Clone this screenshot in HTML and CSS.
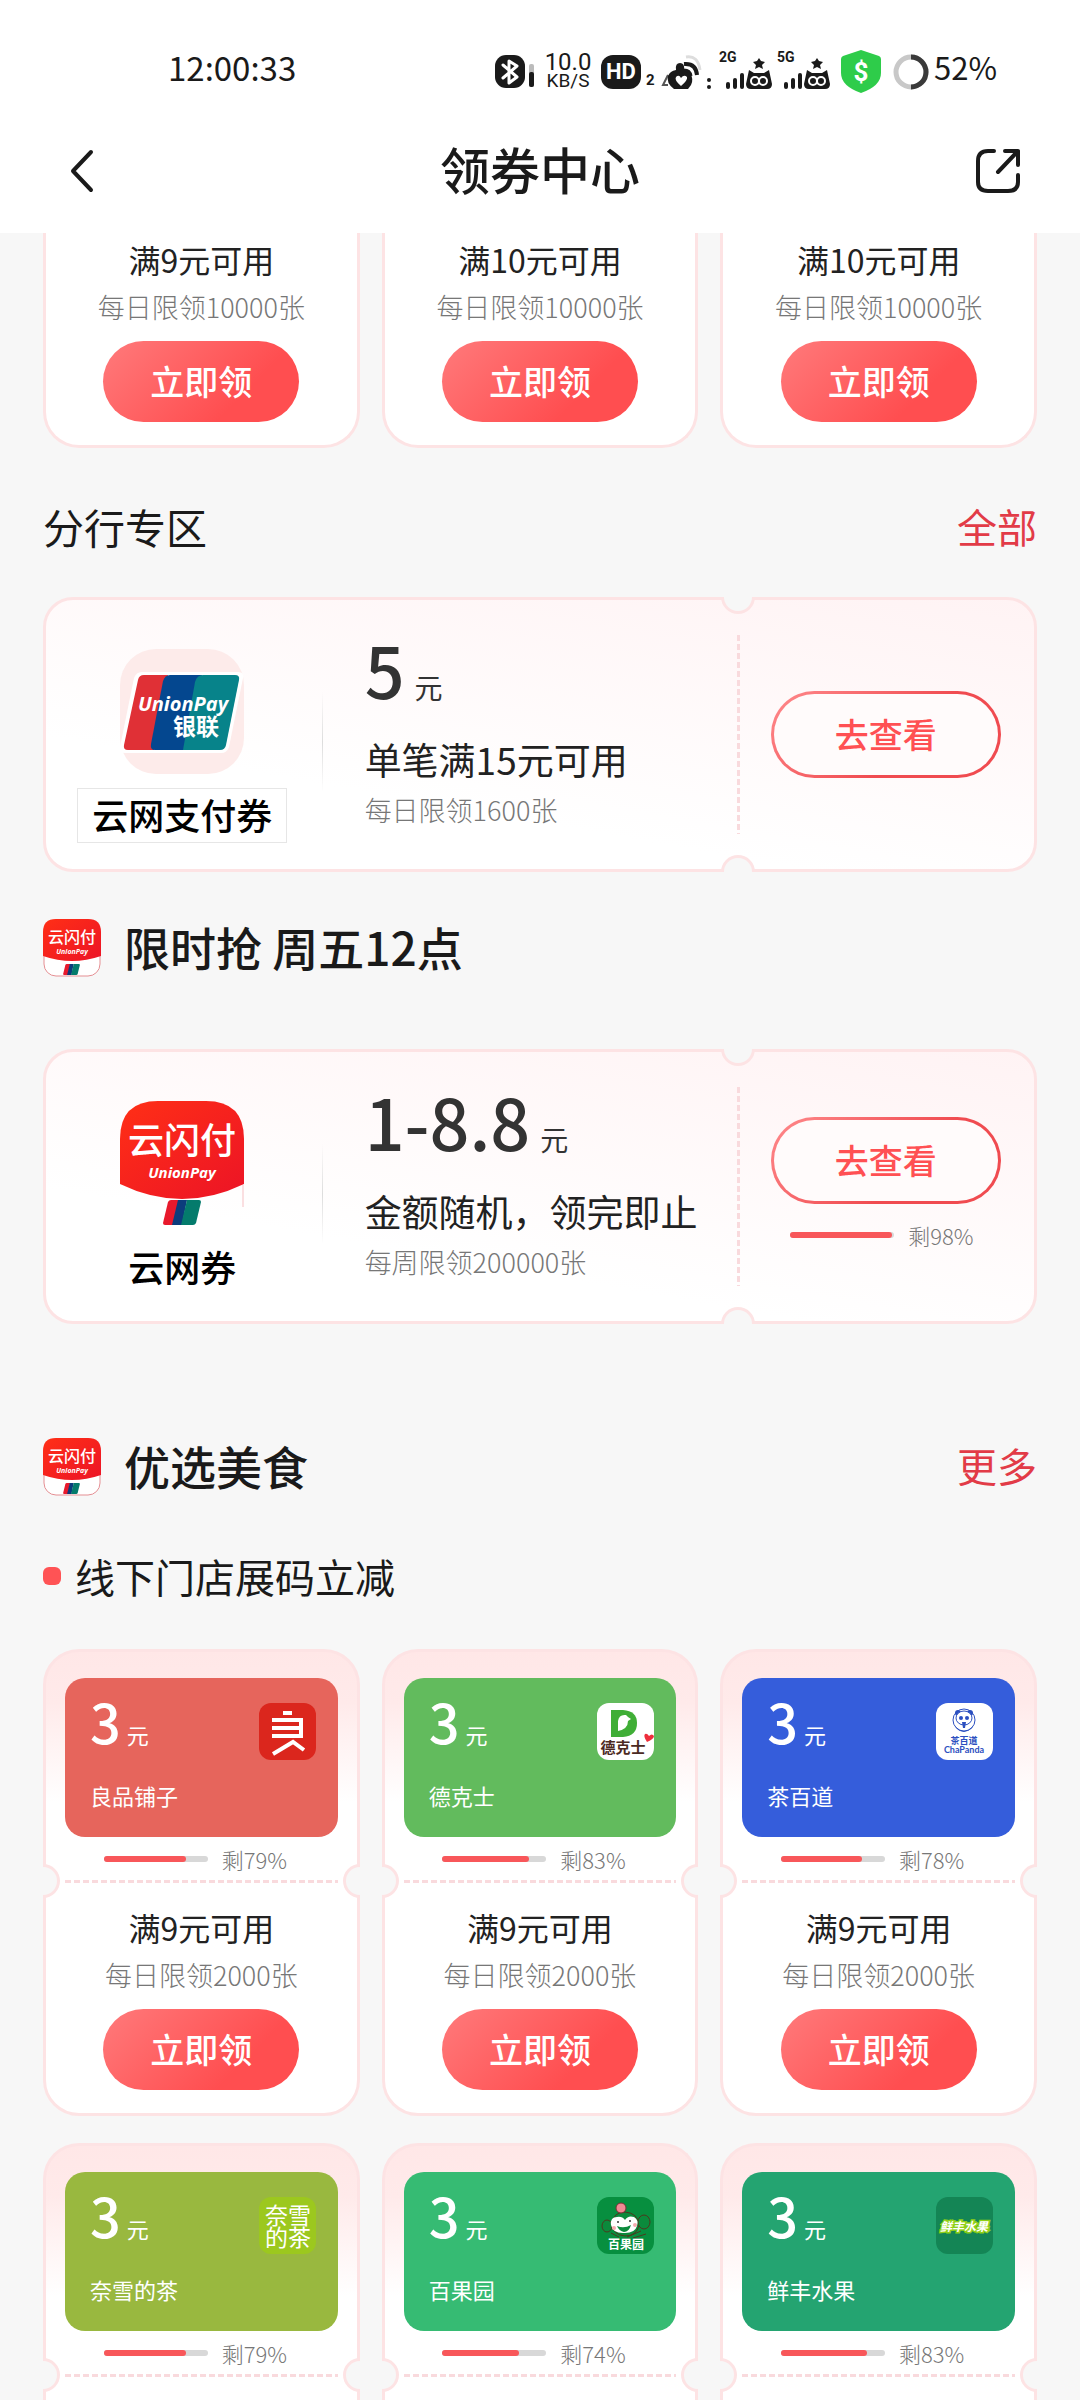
FILE: index.html
```html
<!DOCTYPE html>
<html lang="zh-CN">
<head>
    <meta charset="UTF-8">
    <meta name="viewport" content="width=device-width, initial-scale=1.0">
    <title>领券中心</title>
    <link rel="stylesheet" href="styles.css">
</head>
<body>
    <svg class="defs" width="0" height="0" aria-hidden="true">
        <defs>
            <linearGradient id="redFill" x1="0" y1="0" x2="1" y2="1">
                <stop offset="0" stop-color="#ff2f16"/>
                <stop offset="1" stop-color="#ec1426"/>
            </linearGradient>
        </defs>
        <symbol id="flag" viewBox="0 0 38 25">
            <path d="M8 0H16L11 25H2Q0 25 0 23L5 2Q6 0 8 0Z" fill="#e8192c"/>
            <path d="M15 0H24L19 25H9Z" fill="#0c3c7c"/>
            <path d="M24 0H36Q38 0 38 2L33 23Q32 25 30 25H18Z" fill="#047b6c"/>
        </symbol>
        <symbol id="quickpass" viewBox="0 0 58 58">
            <rect x="1" y="1" width="56" height="56" rx="12" fill="#fff" stroke="#e58f93"/>
            <path d="M0 37V13Q0 0 13 0H45Q58 0 58 13V37Q29 47 0 37Z" fill="url(#redFill)"/>
            <use href="#flag" x="20" y="45" width="17" height="11"/>
        </symbol>
        <symbol id="signal" viewBox="0 0 53 44">
            <g fill="#1a1a1a">
                <rect x="7" y="33" width="4" height="7" rx="2"/>
                <rect x="14" y="29" width="4" height="11" rx="2"/>
                <rect x="21" y="24" width="4" height="16" rx="2"/>
                <path d="M40 9l2 3 4 1-3 3 1 4-4-2-4 2 1-4-3-3 4-1z"/>
                <path d="M30 21l5 3h10l5-3 3 14q0 5-5 5H32q-5 0-5-5z"/>
            </g>
            <circle cx="36" cy="32" r="4" fill="none" stroke="#fff" stroke-width="2"/>
            <circle cx="44" cy="32" r="4" fill="none" stroke="#fff" stroke-width="2"/>
        </symbol>
    </svg>

    <div class="page">
        <header class="header">
            <div class="status">
                <span class="time">12:00:33</span>
                <div class="status-icons">
                    <svg width="40" height="44" viewBox="0 0 40 44">
                        <rect x="0" y="6" width="30" height="33" rx="11" fill="#1a1a1a"/>
                        <path d="M8 16L22 28L14 34V12L22 17L8 29" fill="none" stroke="#fff" stroke-width="3" stroke-linecap="round" stroke-linejoin="round"/>
                        <rect x="34" y="15" width="5" height="23" rx="2" fill="#bbb"/>
                        <rect x="34" y="23" width="5" height="15" rx="2" fill="#1a1a1a"/>
                    </svg>
                    <div class="speed"><span>10.0</span><small>KB/S</small></div>
                    <svg width="40" height="44" viewBox="0 0 40 44">
                        <rect x="0" y="6" width="40" height="34" rx="12" fill="#1a1a1a"/>
                        <text x="20" y="30" text-anchor="middle" class="ico-text" font-size="22" fill="#fff">HD</text>
                    </svg>
                    <svg width="68" height="44" viewBox="0 0 68 44">
                        <text x="0" y="36" class="ico-text" font-size="15" fill="#1a1a1a">2</text>
                        <path d="M22 26L17 36H22" fill="none" stroke="#555" stroke-width="2"/>
                        <path d="M40 8Q52 6 54 21" fill="none" stroke="#ddd" stroke-width="3"/>
                        <path d="M28 40Q20 34 22 27Q24 22 30 21Q29 14 34 14Q39 14 38 21Q42 20 44 24Q48 30 45 36L42 40Z" fill="#1a1a1a"/>
                        <path d="M38 15Q50 14 51 26" fill="none" stroke="#1a1a1a" stroke-width="4"/>
                        <path d="M38 21Q44 21 45 27" fill="none" stroke="#1a1a1a" stroke-width="3"/>
                        <path d="M35 37Q28 31 30 28Q33 25 35 29Q38 25 41 28Q42 31 35 37Z" fill="#fff"/>
                        <circle cx="63" cy="31" r="2" fill="#1a1a1a"/>
                        <circle cx="63" cy="38" r="2" fill="#1a1a1a"/>
                    </svg>
                    <svg width="53" height="44" viewBox="0 0 53 44">
                        <text x="0" y="13" class="ico-text" font-size="14" fill="#1a1a1a">2G</text>
                        <use href="#signal"/>
                    </svg>
                    <svg width="53" height="44" viewBox="0 0 53 44">
                        <text x="0" y="13" class="ico-text" font-size="14" fill="#1a1a1a">5G</text>
                        <use href="#signal"/>
                    </svg>
                    <svg class="shield" width="40" height="44" viewBox="0 0 40 44">
                        <path d="M20 1L38 7Q40 8 40 10V24Q40 37 20 44Q0 37 0 24V10Q0 8 2 7Z" fill="#2ecc4a"/>
                        <text x="20" y="32" text-anchor="middle" class="ico-text" font-size="26" fill="#fff">$</text>
                    </svg>
                    <svg class="ring" width="36" height="44" viewBox="0 0 36 44">
                        <circle cx="18" cy="23" r="15" fill="none" stroke="#c8c8c8" stroke-width="5"/>
                        <path d="M18 8A15 15 0 0 1 18 38" fill="none" stroke="#3a3a3a" stroke-width="5"/>
                    </svg>
                    <span class="battery">52%</span>
                </div>
            </div>
            <div class="nav">
                <button class="nav-btn back" aria-label="返回">
                    <svg width="24" height="44" viewBox="0 0 24 44"><path d="M21 3L3 22L21 41" fill="none" stroke="#1a1a1a" stroke-width="4" stroke-linecap="round" stroke-linejoin="round"/></svg>
                </button>
                <h1>领券中心</h1>
                <button class="nav-btn share" aria-label="分享">
                    <svg width="44" height="46" viewBox="0 0 44 46"><path d="M18 3H12Q2 3 2 13V34Q2 43 12 43H32Q42 43 42 34V27M29 3H42V17M42 3L22 24" fill="none" stroke="#1a1a1a" stroke-width="4" stroke-linecap="round" stroke-linejoin="round"/></svg>
                </button>
            </div>
        </header>

        <main class="content">
            <div class="cards">
                <div class="card card-rest">
                    <div class="card-body">
                        <p class="rule">满9元可用</p>
                        <p class="limit">每日限领10000张</p>
                        <button class="btn-get">立即领</button>
                    </div>
                </div>
                <div class="card card-rest">
                    <div class="card-body">
                        <p class="rule">满10元可用</p>
                        <p class="limit">每日限领10000张</p>
                        <button class="btn-get">立即领</button>
                    </div>
                </div>
                <div class="card card-rest">
                    <div class="card-body">
                        <p class="rule">满10元可用</p>
                        <p class="limit">每日限领10000张</p>
                        <button class="btn-get">立即领</button>
                    </div>
                </div>
            </div>

            <div class="zone-head">
                <h2>分行专区</h2>
                <a class="more" href="#">全部</a>
            </div>

            <div class="ticket">
                <div class="brand">
                    <svg width="128" height="125" viewBox="-2 0 128 125">
                        <rect x="0" y="0" width="124" height="125" rx="36" fill="#fdebea"/>
                        <path d="M22 23H118Q124 23 123 29L109 98Q107 104 101 104H5Q-1 104 0 98L14 29Q16 23 22 23Z" fill="#fff"/>
                        <path d="M24 26H48L34 101H8Q3 101 4 96L18 31Q19 26 24 26Z" fill="#e03036"/>
                        <path d="M50 26H82L68 101H35Q30 101 31 95L43 32Q45 26 50 26Z" fill="#04478f"/>
                        <path d="M83 26H115Q120 26 119 31L106 96Q105 101 100 101H63L75 33Q77 26 83 26Z" fill="#07838a"/>
                        <text x="63" y="62" text-anchor="middle" class="qp-sub" font-size="20">UnionPay</text>
                        <text x="76" y="86" text-anchor="middle" class="up-cn" font-size="23">银联</text>
                    </svg>
                    <span class="brand-name boxed">云网支付券</span>
                </div>
                <div class="info">
                    <div class="amount"><b>5</b><span>元</span></div>
                    <p class="desc">单笔满15元可用</p>
                    <p class="limit">每日限领1600张</p>
                </div>
                <div class="stub">
                    <i class="notch notch-top"></i>
                    <i class="notch notch-bottom"></i>
                    <button class="btn-view">去查看</button>
                </div>
            </div>

            <div class="section-head">
                <svg width="58" height="58" viewBox="0 0 58 58">
                    <use href="#quickpass"/>
                    <text x="29" y="24" text-anchor="middle" class="qp-name" font-size="16">云闪付</text>
                    <text x="29" y="35" text-anchor="middle" class="qp-sub" font-size="7">UnionPay</text>
                </svg>
                <h2>限时抢 周五12点</h2>
            </div>

            <div class="ticket">
                <div class="brand">
                    <svg width="124" height="125" viewBox="0 0 124 125">
                        <path d="M0 83V38Q0 0 38 0H86Q124 0 124 38V83Q62 113 0 83Z" fill="url(#redFill)"/>
                        <path d="M123 84V106" stroke="#f6c0c4"/>
                        <text x="62" y="53" text-anchor="middle" class="qp-name" font-size="36">云闪付</text>
                        <text x="62" y="77" text-anchor="middle" class="qp-sub" font-size="15">UnionPay</text>
                        <use href="#flag" x="43" y="99" width="38" height="25"/>
                    </svg>
                    <span class="brand-name">云网券</span>
                </div>
                <div class="info">
                    <div class="amount"><b>1-8.8</b><span>元</span></div>
                    <p class="desc">金额随机，领完即止</p>
                    <p class="limit">每周限领200000张</p>
                </div>
                <div class="stub">
                    <i class="notch notch-top"></i>
                    <i class="notch notch-bottom"></i>
                    <button class="btn-view">去查看</button>
                    <div class="left">
                        <div class="bar"><div class="bar-fill" style="width: 98%"></div></div>
                        <span>剩98%</span>
                    </div>
                </div>
            </div>

            <div class="section-head food">
                <svg width="58" height="58" viewBox="0 0 58 58">
                    <use href="#quickpass"/>
                    <text x="29" y="24" text-anchor="middle" class="qp-name" font-size="16">云闪付</text>
                    <text x="29" y="35" text-anchor="middle" class="qp-sub" font-size="7">UnionPay</text>
                </svg>
                <h2>优选美食</h2>
                <a class="more" href="#">更多</a>
            </div>
            <h3 class="sub-head">线下门店展码立减</h3>

            <div class="cards">
                <div class="card">
                    <div class="shop red">
                        <div>
                            <div class="price"><b>3</b><span>元</span></div>
                            <p class="shop-name">良品铺子</p>
                        </div>
                        <svg width="57" height="57" viewBox="0 0 57 57">
                            <rect width="57" height="57" rx="12" fill="#db261d"/>
                            <path d="M24 10H33" stroke="#fff" stroke-width="4"/>
                            <path d="M13 17H42V33H13M13 25H42" fill="none" stroke="#fff" stroke-width="4"/>
                            <path d="M14 51L34 39L45 47" fill="none" stroke="#fff" stroke-width="4"/>
                        </svg>
                    </div>
                    <div class="left">
                        <div class="bar"><div class="bar-fill" style="width: 79%"></div></div>
                        <span>剩79%</span>
                    </div>
                    <div class="tear"><i class="notch notch-left"></i><i class="notch notch-right"></i></div>
                    <div class="card-body">
                        <p class="rule">满9元可用</p>
                        <p class="limit">每日限领2000张</p>
                        <button class="btn-get">立即领</button>
                    </div>
                </div>
                <div class="card">
                    <div class="shop green">
                        <div>
                            <div class="price"><b>3</b><span>元</span></div>
                            <p class="shop-name">德克士</p>
                        </div>
                        <svg width="57" height="57" viewBox="0 0 57 57">
                            <rect width="57" height="57" rx="12" fill="#fff"/>
                            <path d="M14 7H26Q40 8 40 20Q40 33 26 34H14Z" fill="#3fae36"/>
                            <path d="M21 28V18Q22 11 29 12L31 14L34 16L31 18Q31 26 21 28Z" fill="#fff"/>
                            <path d="M50 39Q46 33 48 31Q50 30 52 33Q55 30 57 33Q57 36 50 39Z" fill="#ee2e3c"/>
                            <text x="26" y="50" text-anchor="middle" class="logo-cn" font-size="15" fill="#4b2a22">德克士</text>
                        </svg>
                    </div>
                    <div class="left">
                        <div class="bar"><div class="bar-fill" style="width: 83%"></div></div>
                        <span>剩83%</span>
                    </div>
                    <div class="tear"><i class="notch notch-left"></i><i class="notch notch-right"></i></div>
                    <div class="card-body">
                        <p class="rule">满9元可用</p>
                        <p class="limit">每日限领2000张</p>
                        <button class="btn-get">立即领</button>
                    </div>
                </div>
                <div class="card">
                    <div class="shop blue">
                        <div>
                            <div class="price"><b>3</b><span>元</span></div>
                            <p class="shop-name">茶百道</p>
                        </div>
                        <svg width="57" height="57" viewBox="0 0 57 57">
                            <rect width="57" height="57" rx="12" fill="#fff"/>
                            <circle cx="28" cy="17" r="11" fill="#fff" stroke="#2b4fc0" stroke-width="1"/>
                            <path d="M19 23Q28 33 37 23Q36 27 28 29Q21 28 19 23Z" fill="#2b4fc0"/>
                            <circle cx="22" cy="10" r="3" fill="#2b4fc0"/>
                            <circle cx="34" cy="10" r="3" fill="#2b4fc0"/>
                            <ellipse cx="28" cy="15" rx="8" ry="7" fill="#fff" stroke="#2b4fc0"/>
                            <ellipse cx="25" cy="15" rx="2" ry="2" fill="#2b4fc0"/>
                            <ellipse cx="31" cy="15" rx="2" ry="2" fill="#2b4fc0"/>
                            <path d="M26 19H30L29 25H27Z" fill="#2b4fc0"/>
                            <text x="28" y="41" text-anchor="middle" class="logo-cn" font-size="9" fill="#2b4fc0">茶百道</text>
                            <text x="28" y="50" text-anchor="middle" class="logo-en" font-size="9" fill="#2b4fc0">ChaPanda</text>
                        </svg>
                    </div>
                    <div class="left">
                        <div class="bar"><div class="bar-fill" style="width: 78%"></div></div>
                        <span>剩78%</span>
                    </div>
                    <div class="tear"><i class="notch notch-left"></i><i class="notch notch-right"></i></div>
                    <div class="card-body">
                        <p class="rule">满9元可用</p>
                        <p class="limit">每日限领2000张</p>
                        <button class="btn-get">立即领</button>
                    </div>
                </div>
            </div>

            <div class="cards cards-last">
                <div class="card">
                    <div class="shop lime">
                        <div>
                            <div class="price"><b>3</b><span>元</span></div>
                            <p class="shop-name">奈雪的茶</p>
                        </div>
                        <svg width="57" height="57" viewBox="0 0 57 57">
                            <rect width="57" height="57" rx="12" fill="#9cc81e"/>
                            <text x="29" y="27" text-anchor="middle" class="logo-thin" font-size="23" fill="#fff">奈雪</text>
                            <text x="29" y="49" text-anchor="middle" class="logo-thin" font-size="23" fill="#fff">的茶</text>
                        </svg>
                    </div>
                    <div class="left">
                        <div class="bar"><div class="bar-fill" style="width: 79%"></div></div>
                        <span>剩79%</span>
                    </div>
                    <div class="tear"><i class="notch notch-left"></i><i class="notch notch-right"></i></div>
                </div>
                <div class="card">
                    <div class="shop mint">
                        <div>
                            <div class="price"><b>3</b><span>元</span></div>
                            <p class="shop-name">百果园</p>
                        </div>
                        <svg width="57" height="57" viewBox="0 0 57 57">
                            <rect width="57" height="57" rx="12" fill="#078f3f"/>
                            <g fill="#0b8a3c" stroke="#4d3a1e" stroke-width="1">
                                <path d="M15 27Q16 15 28 15Q41 16 42 28Q40 39 28 39Q16 38 15 27Z"/>
                                <ellipse cx="10" cy="29" rx="5" ry="6"/>
                                <ellipse cx="47" cy="25" rx="6" ry="7"/>
                                <path d="M30 40L44 34M36 41L49 37M14 36L22 40" fill="none"/>
                            </g>
                            <circle cx="24" cy="11" r="5" fill="#f08a94" stroke="#7a2f35"/>
                            <path d="M14 28Q13 20 20 20Q25 19 28 23Q31 18 37 20Q42 23 40 29Q38 36 28 36Q16 37 14 28Z" fill="#fff"/>
                            <circle cx="17" cy="31" r="2" fill="#f6a9ae"/>
                            <circle cx="38" cy="28" r="2" fill="#f6a9ae"/>
                            <path d="M20 29Q27 32 34 28Q32 35 27 35Q22 34 20 29Z" fill="#0b8a3c"/>
                            <circle cx="21" cy="25" r="1" fill="#333"/>
                            <circle cx="33" cy="24" r="1" fill="#333"/>
                            <text x="29" y="52" text-anchor="middle" class="logo-cn" font-size="12" fill="#fff">百果园</text>
                        </svg>
                    </div>
                    <div class="left">
                        <div class="bar"><div class="bar-fill" style="width: 74%"></div></div>
                        <span>剩74%</span>
                    </div>
                    <div class="tear"><i class="notch notch-left"></i><i class="notch notch-right"></i></div>
                </div>
                <div class="card">
                    <div class="shop teal">
                        <div>
                            <div class="price"><b>3</b><span>元</span></div>
                            <p class="shop-name">鲜丰水果</p>
                        </div>
                        <svg width="57" height="57" viewBox="0 0 57 57">
                            <rect width="57" height="57" rx="12" fill="#148555"/>
                            <text x="28" y="34" text-anchor="middle" class="logo-fruit" font-size="12">鲜丰水果</text>
                        </svg>
                    </div>
                    <div class="left">
                        <div class="bar"><div class="bar-fill" style="width: 83%"></div></div>
                        <span>剩83%</span>
                    </div>
                    <div class="tear"><i class="notch notch-left"></i><i class="notch notch-right"></i></div>
                </div>
            </div>
        </main>
    </div>
</body>
</html>
```

FILE: styles.css
```css
* {
    box-sizing: border-box;
    margin: 0;
    padding: 0;
}
body {
    font-family: "Noto Sans CJK SC", sans-serif;
    background: #f7f7f7;
    color: #1a1a1a;
}
.defs {
    position: absolute;
}
svg {
    display: block;
    flex: none;
}
button {
    font-family: inherit;
    border: none;
    background: none;
    cursor: pointer;
}
a {
    text-decoration: none;
}
.page {
    min-height: 100vh;
    display: flex;
    flex-direction: column;
}

/* header */
.header {
    background: #fff;
}
.status {
    display: flex;
    justify-content: space-between;
    align-items: center;
    height: 108px;
    padding: 34px 83px 0 168px;
}
.time, .battery {
    line-height: 36px;
    padding-bottom: 8px;
}
.time {
    font-size: 33px;
}
.battery {
    font-size: 31px;
}
.status-icons {
    display: flex;
    align-items: center;
    gap: 5px;
}
.speed {
    display: flex;
    flex-direction: column;
    align-items: center;
    width: 56px;
    font-family: Roboto, sans-serif;
    font-weight: 400;
    font-size: 24px;
    line-height: 20px;
}
.speed small {
    font-size: 19px;
    line-height: 18px;
}
.ico-text {
    font-family: Roboto, sans-serif;
    font-weight: 700;
}
.shield {
    margin-left: 6px;
}
.ring {
    margin-left: 7px;
}
.nav {
    display: grid;
    grid-template-columns: 1fr auto 1fr;
    align-items: center;
    height: 125px;
    padding: 0 60px;
}
.back {
    justify-self: start;
    padding-left: 10px;
}
.share {
    justify-self: end;
}
h1 {
    font-size: 50px;
    line-height: 72px;
    font-weight: 500;
    padding-bottom: 6px;
}

/* content */
.content {
    flex: 1;
    display: flex;
    flex-direction: column;
    padding: 0 43px;
}
.cards {
    display: grid;
    grid-template-columns: repeat(3, 1fr);
    gap: 22px;
}
.cards-last {
    flex: 1;
    margin-top: 27px;
}
.card {
    border: 3px solid #fde3e4;
    border-radius: 36px;
    padding: 26px 19px 23px;
    background: linear-gradient(#ffe7e7, #ffeaea 50px, #fff 150px);
}
.card-rest {
    border-top: none;
    border-radius: 0 0 36px 36px;
    padding-top: 4px;
    background: #fff;
}
.cards-last .card {
    border-bottom: none;
    border-radius: 36px 36px 0 0;
    padding-bottom: 17px;
}
.card-body {
    display: flex;
    flex-direction: column;
    align-items: center;
}
.tear + .card-body {
    padding-top: 22px;
}
.rule {
    font-size: 32px;
    line-height: 44px;
    color: #222;
}
.limit {
    font-size: 27px;
    font-weight: 300;
    line-height: 36px;
    color: #777;
    white-space: nowrap;
}
.card .limit {
    margin-top: 8px;
}
.btn-get {
    width: 196px;
    height: 81px;
    margin-top: 16px;
    padding-bottom: 2px;
    border-radius: 41px;
    background: linear-gradient(135deg, #ff7a7b, #ff4e50 70%);
    color: #fff;
    font-size: 34px;
    font-weight: 500;
}

/* shop block inside a card */
.shop {
    display: flex;
    justify-content: space-between;
    align-items: flex-start;
    border-radius: 20px;
    padding: 15px 22px 26px 25px;
    color: #fff;
}
.shop svg {
    margin-top: 10px;
}
.red { background: #e6655c; }
.green { background: #62bb5d; }
.blue { background: #355ddb; }
.lime { background: #99b83f; }
.mint { background: #36bb73; }
.teal { background: #24a471; }
.price {
    display: flex;
    align-items: baseline;
    gap: 6px;
    height: 56px;
    line-height: 56px;
}
.price b {
    font-size: 54px;
    font-weight: 500;
}
.price span {
    font-size: 22px;
}
.shop-name {
    font-size: 22px;
    line-height: 32px;
    margin-top: 30px;
}
.left {
    display: flex;
    justify-content: center;
    align-items: center;
    gap: 14px;
    height: 43px;
    padding-right: 12px;
    font-size: 22px;
    font-weight: 300;
    line-height: 30px;
    color: #777;
}
.bar {
    width: 104px;
    height: 6px;
    border-radius: 3px;
    background: #d8d8d8;
}
.bar-fill {
    height: 6px;
    border-radius: 3px;
    background: #f8575a;
}
.tear {
    position: relative;
    height: 3px;
    background: repeating-linear-gradient(90deg, #f9dadd 0 6px, transparent 6px 9px);
}
.notch {
    position: absolute;
    background: #f7f7f7;
    border: 3px solid #fde3e4;
}
.notch-left, .notch-right {
    width: 17px;
    height: 34px;
    top: -16px;
}
.notch-left {
    left: -22px;
    border-left: none;
    border-radius: 0 17px 17px 0;
}
.notch-right {
    right: -22px;
    border-right: none;
    border-radius: 17px 0 0 17px;
}
.notch-top, .notch-bottom {
    width: 34px;
    height: 17px;
    left: -17px;
}
.notch-top {
    top: -3px;
    border-top: none;
    border-radius: 0 0 17px 17px;
}
.notch-bottom {
    bottom: -3px;
    border-bottom: none;
    border-radius: 17px 17px 0 0;
}

/* headings */
.zone-head {
    display: flex;
    justify-content: space-between;
    margin: 48px 0 41px;
    line-height: 60px;
}
.zone-head h2 {
    font-size: 41px;
    font-weight: 400;
}
.more {
    font-size: 40px;
    color: #e23b47;
}
.section-head {
    display: flex;
    align-items: center;
    margin: 47px 0 72px;
    line-height: 54px;
}
.section-head h2 {
    margin-left: 23px;
    padding-bottom: 4px;
    font-size: 46px;
    font-weight: 500;
}
.section-head .more {
    margin-left: auto;
    padding-bottom: 4px;
}
.food {
    margin: 114px 0 50px;
}
.sub-head {
    display: flex;
    align-items: center;
    margin-bottom: 43px;
    font-size: 40px;
    font-weight: 400;
    line-height: 60px;
}
.sub-head::before {
    content: "";
    width: 18px;
    height: 18px;
    margin-right: 14px;
    border-radius: 6px;
    background: #ff5355;
}

/* wide tickets */
.ticket {
    display: flex;
    min-height: 275px;
    border: 3px solid #fde3e4;
    border-radius: 30px;
    background: linear-gradient(190deg, #fff3f4, #fff 70%);
}
.brand {
    position: relative;
    width: 28%;
    padding: 49px 4px 0 0;
    display: flex;
    flex-direction: column;
    align-items: center;
}
.brand::after {
    content: "";
    position: absolute;
    right: 0;
    top: 92px;
    width: 1px;
    height: 100px;
    background: linear-gradient(transparent, #ddd, transparent);
}
.brand-name {
    margin-top: 14px;
    padding: 0 14px 2px;
    border: 1px solid transparent;
    font-size: 36px;
    font-weight: 500;
    line-height: 51px;
    color: #000;
}
.boxed {
    border-color: #e6e6e6;
    background: #fff;
}
.info {
    flex: 1;
    padding: 29px 0 0 42px;
}
.amount {
    display: flex;
    align-items: baseline;
    gap: 10px;
    height: 80px;
    line-height: 80px;
    color: #333;
}
.amount b {
    font-size: 70px;
    font-weight: 500;
}
.amount span {
    font-size: 28px;
}
.desc {
    margin: 26px 0 9px;
    font-size: 37px;
    line-height: 48px;
    color: #222;
    white-space: nowrap;
}
.stub {
    position: relative;
    width: 30%;
    display: flex;
    flex-direction: column;
    justify-content: center;
    align-items: center;
}
.stub::before {
    content: "";
    position: absolute;
    left: -1px;
    top: 35px;
    bottom: 35px;
    width: 3px;
    background: repeating-linear-gradient(#f9dadd 0 6px, transparent 6px 9px);
}
.stub .left {
    padding-right: 8px;
    margin-top: 10px;
}
.btn-view {
    width: 230px;
    height: 87px;
    padding-bottom: 2px;
    border: 3px solid transparent;
    border-radius: 44px;
    background: linear-gradient(#fffbfb, #fffbfb) padding-box, linear-gradient(135deg, #ff8a8c, #f04b50 60%) border-box;
    color: #ff5053;
    font-size: 34px;
    font-weight: 500;
}

/* text inside the logos */
.qp-name, .up-cn, .logo-cn {
    font-family: "Noto Sans CJK SC", sans-serif;
    font-weight: 700;
}
.qp-name, .up-cn {
    fill: #fff;
}
.qp-name {
    font-weight: 500;
}
.qp-sub {
    font-family: "Open Sans", sans-serif;
    font-style: italic;
    font-weight: 700;
    fill: #fff;
}
.logo-en {
    font-family: Lato, sans-serif;
    font-weight: 700;
}
.logo-thin {
    font-family: "Noto Sans CJK SC", sans-serif;
}
.logo-fruit {
    font-family: "Noto Sans CJK SC", sans-serif;
    font-weight: 700;
    font-style: italic;
    fill: #fff;
    stroke: #8fd016;
    stroke-width: 3px;
    paint-order: stroke;
}
```
